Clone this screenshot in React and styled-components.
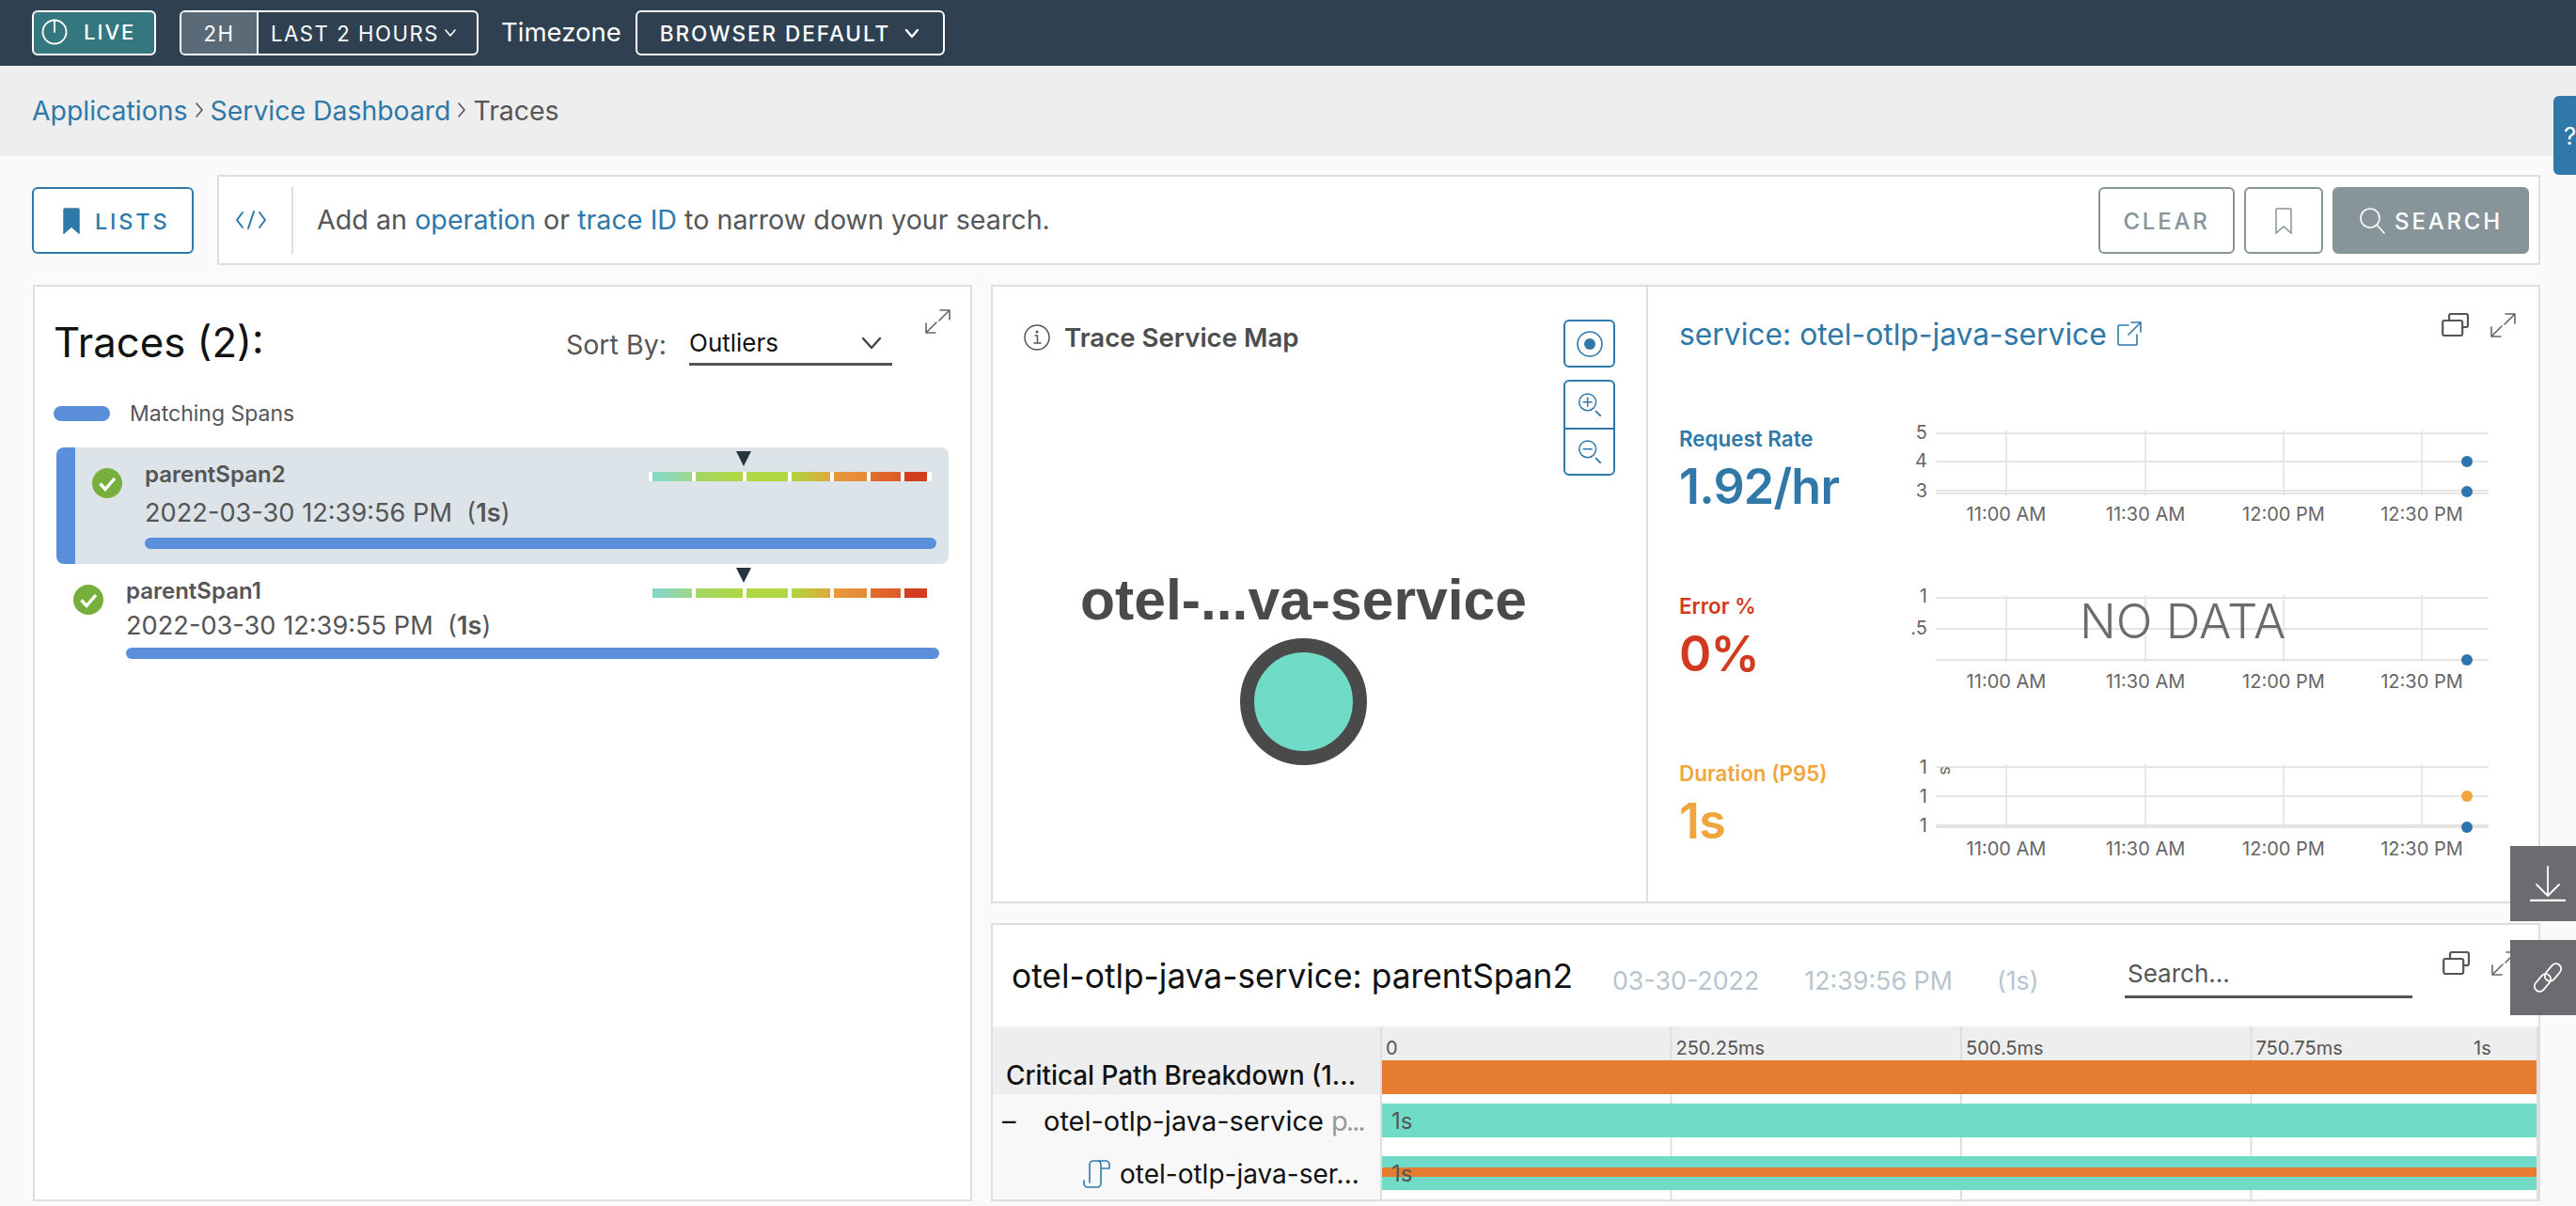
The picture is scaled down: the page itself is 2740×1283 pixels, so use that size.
import React from "react";
import styled, { createGlobalStyle } from "styled-components";

const BLUE = "#2f78a8";
const TEAL = "#70dcc8";
const ORANGE = "#e67c30";
const BAR = "#5b8fdc";
const LINE = "#dedede";
const INK = "#565656";

const Global = createGlobalStyle`
  html, body { margin: 0; padding: 0; height: 100%; overflow: hidden; background: #fafafa; }
  body { font-family: "Inter", "Noto Sans", "Liberation Sans", sans-serif; color: ${INK}; }
  * { box-sizing: border-box; }
`;

const Page = styled.div`width: 2740px; height: 1283px; overflow: hidden;`;

/* ---------- top bar ---------- */
const TopBar = styled.header`
  height: 70px; background: #2f4050; display: flex; align-items: center;
  padding: 0 0 0 34px; color: #fff;
`;
const LiveButton = styled.div`
  width: 132px; height: 48px; border: 2px solid #fff; border-radius: 6px; background: #35777f;
  display: flex; align-items: center; gap: 17px; padding: 0 0 2px 8px;
  font-size: 22px; font-weight: 500; letter-spacing: 2px;
`;
const RangeGroup = styled.div`
  width: 318px; height: 48px; margin-left: 25px; border: 2px solid #fff; border-radius: 6px;
  display: flex; align-items: stretch; overflow: hidden; font-size: 22.2px; font-weight: 400; letter-spacing: 1.5px;
`;
const RangeShort = styled.div`
  width: 82px; background: #5a6a76; border-right: 2px solid #fff;
  display: flex; align-items: center; justify-content: center;
`;
const RangeLong = styled.div`
  flex: 1; display: flex; align-items: center; gap: 5px; padding-left: 13px; white-space: nowrap;
`;
const ZoneLabel = styled.div`margin: 0 0 2px 24px; font-size: 27.5px; font-weight: 400;`;
const ZoneSelect = styled.div`
  width: 329px; height: 48px; margin-left: 15px; border: 2px solid #fff; border-radius: 6px;
  display: flex; align-items: center; gap: 15px; padding-left: 24px;
  font-size: 22.6px; font-weight: 500; letter-spacing: 1.9px; white-space: nowrap;
`;

/* ---------- breadcrumb ---------- */
const Crumbs = styled.nav`
  height: 96px; background: #eeeeee; display: flex; align-items: center; gap: 7px;
  padding: 0 0 2px 34px; font-size: 28.4px; font-weight: 400;
`;
const CrumbLink = styled.span`color: ${BLUE};`;
const CrumbNow = styled.span`color: ${INK};`;

/* ---------- search row ---------- */
const SearchRow = styled.section`
  display: flex; align-items: center; gap: 25px; padding-left: 34px; margin-top: 20px; height: 96px;
`;
const ListsButton = styled.div`
  width: 172px; height: 71px; border: 2px solid ${BLUE}; border-radius: 6px; background: #fff; color: ${BLUE};
  display: flex; align-items: center; gap: 16px; padding: 2px 0 0 31px; font-size: 23.5px; font-weight: 500; letter-spacing: 2.8px;
`;
const QueryBar = styled.div`
  width: 2471px; height: 96px; background: #fff; border: 2px solid ${LINE};
  display: flex; align-items: center; padding-right: 10px;
`;
const CodeCell = styled.div`
  width: 79px; height: 71px; border-right: 2px solid ${LINE}; padding-right: 10px;
  display: flex; align-items: center; justify-content: center;
`;
const QueryText = styled.div`
  flex: 1; padding: 0 0 2px 25px; font-size: 28.7px; font-weight: 400;
`;
const QueryLink = styled.span`color: ${BLUE};`;
const GhostButton = styled.div`
  width: ${p => p.$w}px; height: 71px; margin-left: 10px; border: 2px solid #87949a; border-radius: 6px; color: #87949a;
  display: flex; align-items: center; justify-content: center; padding-top: 2px; font-size: 24px; font-weight: 500; letter-spacing: 2.8px;
`;
const SolidButton = styled(GhostButton)`
  background: #87949a; color: #fff; gap: 8px;
`;

/* ---------- columns ---------- */
const Columns = styled.main`
  display: flex; align-items: flex-start; gap: 20px; padding: 21px 0 0 35px;
`;
const Card = styled.section`
  background: #fff; border: 2px solid ${LINE};
`;
const TracesCard = styled(Card)`width: 999px; height: 975px;`;
const RightCol = styled.div`width: 1648px; display: flex; flex-direction: column; gap: 21px;`;

/* ---------- traces ---------- */
const TracesHead = styled.div`
  display: flex; align-items: center; padding: 30px 21px 0 20px;
`;
const TracesTitle = styled.h1`
  flex: 1; margin: 0; font-size: 43.7px; line-height: 60px; font-weight: 400; color: #111;
`;
const SortLabel = styled.span`padding-top: 2px; font-size: 28.6px; font-weight: 400;`;
const SortSelect = styled.div`
  width: 216px; height: 48px; margin-left: 24px; border-bottom: 3px solid #555; color: #111;
  display: flex; align-items: center; justify-content: space-between; padding: 2px 11px 0 0;
  font-size: 26px; font-weight: 400;
`;
const ExpandSlot = styled.div`
  display: flex; align-self: flex-start; margin: -6px 0 0 35px;
`;
const Legend = styled.div`
  display: flex; align-items: center; gap: 21px; height: 36px; margin: 27px 0 0 20px; font-size: 23px; font-weight: 400;
`;
const LegendPill = styled.span`width: 60px; height: 16px; border-radius: 8px; background: ${BAR};`;
const TraceList = styled.div`margin: 18px 23px 0 23px;`;
const TraceRow = styled.article`
  position: relative; display: flex; gap: 24px; height: ${p => p.$selected ? 124 : 110}px;
  padding: 12px ${p => p.$selected ? 13 : 10}px 0 18px;
  background: ${p => p.$selected ? "#dce4ea" : "transparent"};
  border-left: ${p => p.$selected ? `20px solid ${BAR}` : "none"};
  border-radius: 8px;
`;
const CheckSlot = styled.div`flex: none; width: 32px; height: 32px; margin-top: 10px;`;
const TraceBody = styled.div`flex: 1; min-width: 0;`;
const TraceTop = styled.div`display: flex; justify-content: space-between; align-items: flex-start; height: 34px;`;
const TraceName = styled.div`font-size: 24px; line-height: 34px; font-weight: 600; color: #555;`;
const Strip = styled.div`
  position: relative; display: flex; gap: 4px; width: 301px; height: 10px; margin: 14px ${p => p.$selected ? 5 : 8}px 0 0;
  padding: 0 4px; background: #fff;
`;
const StripCell = styled.span`
  height: 10px; width: ${p => p.$w}px; background: ${p => p.$bg};
`;
const Marker = styled.span`
  position: absolute; left: 93px; top: -22px; width: 0; height: 0;
  border-left: 8px solid transparent; border-right: 8px solid transparent; border-top: 16px solid #25343f;
`;
const TraceDate = styled.div`
  font-size: 27.2px; line-height: ${p => p.$selected ? 48 : 40}px; font-weight: 400; color: #555; white-space: pre;
`;
const TraceStrong = styled.b`font-weight: 600;`;
const SpanBar = styled.div`
  height: 12px; margin-top: ${p => p.$selected ? 2 : 3}px; border-radius: 6px; background: ${BAR};
`;

/* ---------- overview card ---------- */
const OverviewCard = styled(Card)`height: 658px; display: flex; margin-right: 0;`;
const MapPane = styled.div`
  width: 697px; flex: none; border-right: 2px solid ${LINE}; padding: 35px 33px 0 33px;
`;
const MapHead = styled.div`display: flex; justify-content: space-between; align-items: flex-start;`;
const MapTitle = styled.h2`
  display: flex; align-items: center; gap: 15px; margin: 0; height: 38px;
  font-size: 27.6px; font-weight: 600; color: #4d4d4d;
`;
const MapControls = styled.div`display: flex; flex-direction: column; gap: 13px; width: 55px;`;
const ControlButton = styled.div`
  height: 51px; border: 2px solid ${BLUE}; border-radius: 6px; display: flex; align-items: center; justify-content: center;
`;
const ControlStack = styled.div`
  border: 2px solid ${BLUE}; border-radius: 6px; display: flex; flex-direction: column;
`;
const ControlCell = styled.div`
  height: 49px; display: flex; align-items: center; justify-content: center;
  & + & { border-top: 2px solid ${BLUE}; }
`;
const MapNode = styled.div`
  display: flex; flex-direction: column; align-items: center; margin-top: 97px; padding-right: 34px;
`;
const NodeLabel = styled.div`
  font-family: "Liberation Sans", Arial, sans-serif; font-weight: 700; font-size: 60.6px; line-height: 70px; color: #4a4a4a; white-space: nowrap;
`;
const NodeCircle = styled.div`
  width: 135px; height: 135px; margin-top: 6px; border-radius: 50%; border: 15px solid #4a4a4a; background: ${TEAL};
`;

const StatsPane = styled.div`flex: 1; padding: 0 0 0 33px;`;
const StatsHead = styled.div`
  height: 135px; display: flex; align-items: flex-start; padding: 26px 24px 0 0;
`;
const ServiceLink = styled.a`
  flex: 1; display: flex; align-items: center; gap: 11px; height: 48px; color: ${BLUE};
  font-size: 31.8px; font-weight: 400;
`;
const HeadIcons = styled.div`display: flex; gap: 22px; margin-top: 2px;`;
const StatRow = styled.div`
  display: flex; height: 165px; margin-bottom: 13px;
`;
const StatText = styled.div`width: 224px; padding-top: 10px; flex: none; color: ${p => p.$color};`;
const StatLabel = styled.div`font-size: 22.4px; line-height: 34px; font-weight: 600;`;
const StatValue = styled.div`font-size: 52px; line-height: 68px; font-weight: 600; letter-spacing: -0.8px;`;
const ChartBox = styled.div`position: relative; width: 660px; height: 130px;`;
const NoData = styled.div`
  position: absolute; left: 202px; top: 20px; font-size: 51px; line-height: 46px; font-weight: 300; color: #6a6a70; white-space: nowrap;
`;
const AxisText = styled.text`
  font-family: "Inter", "Noto Sans", sans-serif; font-size: ${p => p.$size || 20}px; fill: #666;
`;

/* ---------- span card ---------- */
const SpanCard = styled(Card)`height: 296px; display: flex; flex-direction: column;`;
const SpanHead = styled.div`
  height: 108px; flex: none; display: flex; align-items: center; padding: 0 0 0 20px;
`;
const SpanTitle = styled.h2`
  margin: 0; font-size: 35.3px; font-weight: 400; color: #111;
`;
const SpanMeta = styled.span`
  margin: 10px 0 0 ${p => p.$gap}px; font-size: 26.8px; font-weight: 400; color: #b8c4ce;
`;
const SpanSearch = styled.div`
  width: 306px; height: 50px; margin: -2px 0 0 auto; border-bottom: 3px solid #555; padding-left: 3px;
  display: flex; align-items: center; font-size: 26px; font-weight: 400; color: #555;
`;
const SpanIcons = styled.div`
  display: flex; gap: 22px; align-self: flex-start; margin: 28px 23px 0 32px;
`;
const FlameRow = styled.div`
  display: flex; height: ${p => p.$h}px; flex: none;
`;
const FlameName = styled.div`
  width: 412px; flex: none; display: flex; align-items: ${p => p.$align || "center"};
  background: ${p => p.$head ? "#eeeeee" : "#f8f8f8"};
  border-top: ${p => p.$sep ? "1px solid #fff" : "none"};
  padding-left: ${p => p.$pad}px; padding-right: 6px;
  font-size: ${p => p.$size || 28}px; color: #111; white-space: nowrap; overflow: hidden;
`;
const FlameHeadName = styled.span`
  font-weight: 500; font-size: 27.8px; padding-bottom: 2px; line-height: 36px;
`;
const FlameLeaf = styled.span`margin-left: 9px;`;
const Dash = styled.span`width: 44px; flex: none;`;
const Muted = styled.span`color: #999; margin-left: 8px; letter-spacing: -2px;`;
const Lane = styled.div`
  flex: 1; display: flex; flex-direction: column; justify-content: ${p => p.$justify || "center"};
  border-right: 2px solid ${LINE};
  background: linear-gradient(to right, ${LINE} 2px, transparent 2px) 0 0 / 308.5px 100% repeat-x;
`;
const TickRow = styled.div`
  height: 36px; display: flex; background: linear-gradient(to right, ${LINE} 2px, #eeeeee 2px) 0 0 / 308.5px 100% repeat-x;
`;
const Tick = styled.span`
  width: 308.5px; flex: none; padding-left: 6px; font-size: 20px; line-height: 46px; color: #555;
`;
const LastTick = styled(Tick)`width: auto; margin-left: -77px;`;
const LaneBar = styled.div`
  position: relative; height: 36px; margin-left: 2px; background: ${p => p.$color};
  display: flex; align-items: center; padding-left: 10px; font-size: 24px; color: #555;
`;
const LaneStripe = styled.span`
  position: absolute; left: 0; right: 0; top: 12px; height: 10px; background: ${ORANGE};
`;
const LaneText = styled.span`position: relative;`;

/* ---------- floating ---------- */
const HelpTab = styled.div`
  position: fixed; top: 102px; right: 0; width: 24px; height: 84px; background: ${BLUE}; color: #fff;
  border-radius: 6px 0 0 6px; padding-left: 11px; display: flex; align-items: center; overflow: hidden; font-size: 26px;
`;
const SideTabs = styled.div`
  position: fixed; top: 900px; right: 0; display: flex; flex-direction: column; gap: 20px;
`;
const SideTab = styled.div`
  width: 70px; height: 80px; background: #6d6a70; display: flex; align-items: center; justify-content: center; padding-left: 10px;
`;

/* ---------- icons ---------- */
const Ico = ({ w, h, vw, vh, color = "currentColor", sw = 2, children }) => (
  <svg width={w} height={h} viewBox={`0 0 ${vw || w} ${vh || h}`} fill="none" stroke={color} strokeWidth={sw} strokeLinecap="round" strokeLinejoin="round" style={{ flex: "none", display: "block" }}>
    {children}
  </svg>
);
const Chevron = ({ w = 15, h = 9, sw = 2, color = "#fff" }) => (
  <Ico w={w} h={h} sw={sw} color={color}><path d={`M2 2L${w / 2} ${h - 2}L${w - 2} 2`} /></Ico>
);
const Expand = ({ color = "#666" }) => (
  <Ico w={27} h={26} sw={1.6} color={color}>
    <path d="M16 1h10v10M26 1L15 12M1 15v10h10M1 25l11-11" />
  </Ico>
);
const Restore = () => (
  <Ico w={30} h={25} sw={2.2} color="#555">
    <rect x="1.2" y="8" width="21" height="16" rx="2" />
    <path d="M8 8V3a2 2 0 012-2h16a2 2 0 012 2v10a2 2 0 01-2 2h-3.5" />
  </Ico>
);
const Check = () => (
  <svg width="32" height="32" viewBox="0 0 32 32" style={{ display: "block" }}>
    <circle cx="16" cy="16" r="16" fill="#77af3c" />
    <path d="M8.5 16.5l5.5 6 10-11.5" fill="none" stroke="#fff" strokeWidth="3.4" />
  </svg>
);
const Bookmark = ({ fill, color }) => (
  <svg width="18" height="28" viewBox="0 0 18 28" style={{ display: "block", flex: "none" }}>
    <path d="M2 1h14a1 1 0 011 1v25l-8-7-8 7V2a1 1 0 011-1z" fill={fill || "none"} stroke={color} strokeWidth="1.5" />
  </svg>
);
const ZoomGlyph = ({ plus }) => (
  <Ico w={25} h={25} vw={28} vh={28} sw={1.7} color={BLUE}>
    <circle cx="12" cy="11" r="10" />
    <path d="M7 11h10" />
    {plus && <path d="M12 6v10" />}
    <path d="M22 22l5 5" strokeWidth="2.2" />
  </Ico>
);

const HEAT = [
  [42, "linear-gradient(to right,#80d8cc,#a0d68c)"],
  [50, "linear-gradient(to right,#a4d668,#b0d840)"],
  [44, "#b0d845"],
  [41, "linear-gradient(to right,#b0d640,#e0a83e)"],
  [35, "linear-gradient(to right,#e8983a,#e68a38)"],
  [32, "linear-gradient(to right,#e26e2e,#dc5a28)"],
  [24, "#d43d1e"],
];
const HeatStrip = ({ selected }) => (
  <Strip $selected={selected}>
    {HEAT.map(([w, bg]) => <StripCell key={w} $w={w} $bg={bg} />)}
    <Marker />
  </Strip>
);

const Trace = ({ selected, name, date }) => (
  <TraceRow $selected={selected}>
    <CheckSlot><Check /></CheckSlot>
    <TraceBody>
      <TraceTop>
        <TraceName>{name}</TraceName>
        <HeatStrip selected={selected} />
      </TraceTop>
      <TraceDate $selected={selected}>{date}  (<TraceStrong>1s</TraceStrong>)</TraceDate>
      <SpanBar $selected={selected} />
    </TraceBody>
  </TraceRow>
);

const XS = [124, 272, 419, 566];
const XL = ["11:00 AM", "11:30 AM", "12:00 PM", "12:30 PM"];
const Chart = ({ lines, ticks, dots, unit, noData }) => (
  <ChartBox>
    <svg width="660" height="130" style={{ display: "block" }}>
      {XS.map(x => <line key={x} x1={x} x2={x} y1={lines[0] - 3} y2={lines[lines.length - 1] + 2} stroke="#e8e8e8" strokeWidth="2" />)}
      {lines.map(y => <line key={y} x1="49" x2="637" y1={y} y2={y} stroke="#e4e4e4" strokeWidth="2" />)}
      {ticks.map(([t, y], i) => <AxisText key={i} x="40" y={y + 7} textAnchor="end">{t}</AxisText>)}
      {XS.map((x, i) => <AxisText key={x} x={x} y="114" textAnchor="middle">{XL[i]}</AxisText>)}
      {unit && <AxisText $size={18} x="0" y="0" transform="translate(54 19) rotate(90)">s</AxisText>}
      {dots.map(([y, c]) => <circle key={y} cx="614" cy={y} r="6" fill={c} />)}
    </svg>
    {noData && <NoData>NO DATA</NoData>}
  </ChartBox>
);

const Stat = ({ color, label, value, ...chart }) => (
  <StatRow>
    <StatText $color={color}>
      <StatLabel>{label}</StatLabel>
      <StatValue>{value}</StatValue>
    </StatText>
    <Chart {...chart} />
  </StatRow>
);

export default function App() {
  return (
    <Page>
      <Global />
      <TopBar>
        <LiveButton>
          <Ico w={28} h={28} sw={1.8} color="#fff"><circle cx="14" cy="14" r="12.5" /><path d="M14 1.5V14" /></Ico>
          <span>LIVE</span>
        </LiveButton>
        <RangeGroup>
          <RangeShort>2H</RangeShort>
          <RangeLong>LAST 2 HOURS<Chevron w={14} h={10} sw={1.6} /></RangeLong>
        </RangeGroup>
        <ZoneLabel>Timezone</ZoneLabel>
        <ZoneSelect>BROWSER DEFAULT<Chevron w={16} h={11} sw={2.4} /></ZoneSelect>
      </TopBar>

      <Crumbs>
        <CrumbLink>Applications</CrumbLink>
        <Ico w={10} h={18} sw={1.6} color="#555"><path d="M2 2l6 7-6 7" /></Ico>
        <CrumbLink>Service Dashboard</CrumbLink>
        <Ico w={10} h={18} sw={1.6} color="#555"><path d="M2 2l6 7-6 7" /></Ico>
        <CrumbNow>Traces</CrumbNow>
      </Crumbs>

      <SearchRow>
        <ListsButton>
          <Bookmark fill={BLUE} color={BLUE} />
          <span>LISTS</span>
        </ListsButton>
        <QueryBar>
          <CodeCell>
            <Ico w={34} h={20} sw={2} color={BLUE}><path d="M8 2L2 10l6 8M26 2l6 8-6 8M20 1l-6 18" /></Ico>
          </CodeCell>
          <QueryText>
            Add an <QueryLink>operation</QueryLink> or <QueryLink>trace ID</QueryLink> to narrow down your search.
          </QueryText>
          <GhostButton $w={145}>CLEAR</GhostButton>
          <GhostButton $w={84}><Bookmark color="#87949a" /></GhostButton>
          <SolidButton $w={209}>
            <Ico w={30} h={28} sw={1.6} color="#fff"><circle cx="12" cy="11" r="10" /><path d="M19 18l8 9" /></Ico>
            <span>SEARCH</span>
          </SolidButton>
        </QueryBar>
      </SearchRow>

      <Columns>
        <TracesCard>
          <TracesHead>
            <TracesTitle>Traces (2):</TracesTitle>
            <SortLabel>Sort By:</SortLabel>
            <SortSelect>
              <span>Outliers</span>
              <Chevron w={22} h={14} sw={2.4} color="#444" />
            </SortSelect>
            <ExpandSlot><Expand /></ExpandSlot>
          </TracesHead>
          <Legend><LegendPill />Matching Spans</Legend>
          <TraceList>
            <Trace selected name="parentSpan2" date="2022-03-30 12:39:56 PM" />
            <Trace name="parentSpan1" date="2022-03-30 12:39:55 PM" />
          </TraceList>
        </TracesCard>

        <RightCol>
          <OverviewCard>
            <MapPane>
              <MapHead>
                <MapTitle>
                  <Ico w={28} h={28} sw={1.5} color="#555">
                    <circle cx="14" cy="14" r="13" />
                    <path d="M12 12h2.5v8M11 20h7" />
                    <circle cx="14" cy="8" r="0.8" fill="#555" />
                  </Ico>
                  Trace Service Map
                </MapTitle>
                <MapControls>
                  <ControlButton>
                    <Ico w={28} h={28} sw={1.6} color={BLUE}>
                      <circle cx="14" cy="14" r="13" />
                      <circle cx="14" cy="14" r="6" fill={BLUE} stroke="none" />
                    </Ico>
                  </ControlButton>
                  <ControlStack>
                    <ControlCell><ZoomGlyph plus /></ControlCell>
                    <ControlCell><ZoomGlyph /></ControlCell>
                  </ControlStack>
                </MapControls>
              </MapHead>
              <MapNode>
                <NodeLabel>otel-...va-service</NodeLabel>
                <NodeCircle />
              </MapNode>
            </MapPane>
            <StatsPane>
              <StatsHead>
                <ServiceLink>
                  service: otel-otlp-java-service
                  <Ico w={26} h={26} sw={1.6} color={BLUE}>
                    <path d="M12 4H2a1 1 0 00-1 1v19a1 1 0 001 1h18a1 1 0 001-1V14M15 1h10v10M25 1L12 14" />
                  </Ico>
                </ServiceLink>
                <HeadIcons><Restore /><Expand /></HeadIcons>
              </StatsHead>
              <Stat color={BLUE} label="Request Rate" value="1.92/hr"
                lines={[21, 51, 82, 85]} ticks={[["5", 20], ["4", 50], ["3", 82]]}
                dots={[[51, "#2e75b0"], [83, "#2e75b0"]]} />
              <Stat color="#d13a1e" label="Error %" value="0%" noData
                lines={[18, 51, 84]} ticks={[["1", 16], [".5", 50]]}
                dots={[[84, "#2e75b0"]]} />
              <Stat color="#f0a63c" label="Duration (P95)" value="1s" unit
                lines={[20, 51, 82, 84]} ticks={[["1", 20], ["1", 51], ["1", 82]]}
                dots={[[51, "#f0a63c"], [84, "#2e75b0"]]} />
            </StatsPane>
          </OverviewCard>

          <SpanCard>
            <SpanHead>
              <SpanTitle>otel-otlp-java-service: parentSpan2</SpanTitle>
              <SpanMeta $gap={42}>03-30-2022</SpanMeta>
              <SpanMeta $gap={48}>12:39:56 PM</SpanMeta>
              <SpanMeta $gap={47}>(1s)</SpanMeta>
              <SpanSearch>Search...</SpanSearch>
              <SpanIcons><Restore /><Expand /></SpanIcons>
            </SpanHead>
            <FlameRow $h={72}>
              <FlameName $head $pad={14} $align="flex-end"><FlameHeadName>Critical Path Breakdown (1...</FlameHeadName></FlameName>
              <Lane $justify="flex-start">
                <TickRow>
                  <Tick>0</Tick><Tick>250.25ms</Tick><Tick>500.5ms</Tick><Tick>750.75ms</Tick><LastTick>1s</LastTick>
                </TickRow>
                <LaneBar $color={ORANGE} />
              </Lane>
            </FlameRow>
            <FlameRow $h={56}>
              <FlameName $pad={10} $size={29}><Dash>–</Dash>otel-otlp-java-service<Muted>p...</Muted></FlameName>
              <Lane><LaneBar $color={TEAL}>1s</LaneBar></Lane>
            </FlameRow>
            <FlameRow $h={56}>
              <FlameName $pad={96} $sep>
                <Ico w={30} h={30} sw={1.6} color={BLUE}>
                  <path d="M7 24V5a4 4 0 014-4h13a4 4 0 014 4v4h-9M19 9V5a4 4 0 00-4-4M1 22v3a4 4 0 004 4h10a4 4 0 004-4V9" />
                </Ico>
                <FlameLeaf>otel-otlp-java-ser...</FlameLeaf>
              </FlameName>
              <Lane>
                <LaneBar $color={TEAL}>
                  <LaneStripe />
                  <LaneText>1s</LaneText>
                </LaneBar>
              </Lane>
            </FlameRow>
          </SpanCard>
        </RightCol>
      </Columns>

      <HelpTab>?</HelpTab>
      <SideTabs>
        <SideTab>
          <Ico w={38} h={38} sw={1.8} color="#fff"><path d="M19 1v30M7 20l12 12 12-12" /><path d="M1 37h36" strokeWidth="2.4" /></Ico>
        </SideTab>
        <SideTab>
          <Ico w={34} h={34} sw={1.8} color="#fff">
            <rect x="17" y="1" width="11" height="21" rx="5.5" transform="rotate(40 22.5 11.5)" />
            <rect x="6" y="12" width="11" height="21" rx="5.5" transform="rotate(40 11.5 22.5)" />
          </Ico>
        </SideTab>
      </SideTabs>
    </Page>
  );
}
